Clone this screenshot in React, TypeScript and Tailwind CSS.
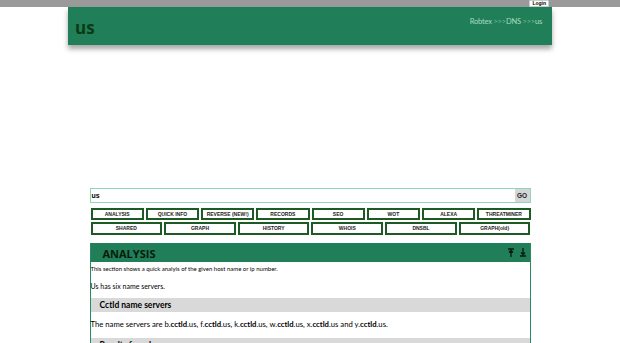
const row1 = ["ANALYSIS", "QUICK INFO", "REVERSE (NEW!)", "RECORDS", "SEO", "WOT", "ALEXA", "THREATMINER"];
const row2 = ["SHARED", "GRAPH", "HISTORY", "WHOIS", "DNSBL", "GRAPH(old)"];
const servers = ["b", "f", "k", "w", "x", "y"];

function NavButton({ label }: { label: string }) {
  return (
    <button className="h-full border-2 border-[#1d5a24] bg-white text-[5px] font-bold leading-none text-[#222] [font-family:'Liberation_Sans',Arial,sans-serif]">
      {label}
    </button>
  );
}

export default function App() {
  return (
    <div className="min-h-[343px] bg-white [font-family:Lato,'Open_Sans',sans-serif]">
      <div className="h-[7px] bg-[#9a9a9a]">
        <div className="relative mx-auto h-full w-[484px]">
          <span className="absolute right-[3px] top-0 h-[7px] rounded-[1px] border border-[#ccc] bg-white px-[2px] text-[5px] font-bold leading-[5px] text-black [font-family:'Liberation_Sans',Arial,sans-serif]">
            Login
          </span>
        </div>
      </div>

      <header className="mx-auto flex h-[38px] w-[484px] items-center justify-between bg-[#207f58] pl-[7px] pr-[10px] shadow-[0_4px_5px_rgba(0,0,0,0.35)]">
        <span className="mt-[2px] text-[17px] font-bold leading-none text-[#0b3a14] [font-family:'Open_Sans',sans-serif]">us</span>
        <nav className="mb-[8px] text-[7.5px] leading-none tracking-[-0.2px] text-[#a8dcc0]">
          Robtex <span className="text-[#6cc296]">&gt;&gt;&gt;</span>DNS <span className="text-[#6cc296]">&gt;&gt;&gt;</span>us
        </nav>
      </header>

      <main className="mx-auto mt-[143px] w-[441px]">
        <div className="flex h-[15px] border border-[#8fd6b6]">
          <span className="flex-1 pl-[1px] text-[7px] font-bold leading-[13px] text-black [font-family:'Liberation_Sans',Arial,sans-serif]">us</span>
          <span className="w-[15px] bg-[#d6d6d6] text-center text-[6.5px] font-bold leading-[13px] text-[#222] [font-family:'Liberation_Sans',Arial,sans-serif]">GO</span>
        </div>

        <div className="mt-[5px] grid h-[12px] grid-cols-8 gap-x-[2px] pl-[1px]">
          {row1.map((l) => (
            <NavButton key={l} label={l} />
          ))}
        </div>
        <div className="mt-[2px] grid h-[13px] grid-cols-6 gap-x-[2px] pl-[1px]">
          {row2.map((l) => (
            <NavButton key={l} label={l} />
          ))}
        </div>

        <section className="mt-[8px] border-x border-[#2b8a62]">
          <div className="flex h-[19px] items-center justify-between bg-[#207f58] pl-[12px] pr-[3px]">
            <h2 className="mt-[2px] text-[11px] font-bold leading-none text-[#071a0c] [font-family:'Open_Sans',sans-serif]">ANALYSIS</h2>
            <div className="flex items-center gap-[4px] text-[#071a0c]">
              <svg width="8" height="9" viewBox="0 0 8 9" fill="none" stroke="currentColor" strokeWidth="1.3">
                <path d="M1 1h6M4 2.5V9M2 4.5l2-2 2 2" />
              </svg>
              <svg width="8" height="9" viewBox="0 0 8 9" fill="none" stroke="currentColor" strokeWidth="1.3">
                <path d="M1 8h6M4 0v6.5M2 4.5l2 2 2-2" />
              </svg>
            </div>
          </div>
          <p className="mt-[3px] text-[6px] leading-[7px] text-black">
            This section shows a quick analyis of the given host name or ip number.
          </p>
          <p className="mt-[10px] text-[7px] leading-[8px] text-black">Us has six name servers.</p>
          <h3 className="mt-[8px] h-[14px] bg-[#d9d9d9] pl-[9px] text-[8.5px] font-bold leading-[14px] text-black">
            Cctld name servers
          </h3>
          <p className="mt-[8px] text-[7.7px] leading-[8px] text-black">
            The name servers are{" "}
            {servers.map((s, i) => (
              <span key={s}>
                {s}.<b>cctld</b>.us{i < 4 ? ", " : i === 4 ? " and " : "."}
              </span>
            ))}
          </p>
          <h3 className="mt-[10px] h-[14px] bg-[#d9d9d9] pl-[9px] text-[8.5px] font-bold leading-[14px] text-black">
            Results found
          </h3>
        </section>
      </main>
    </div>
  );
}
